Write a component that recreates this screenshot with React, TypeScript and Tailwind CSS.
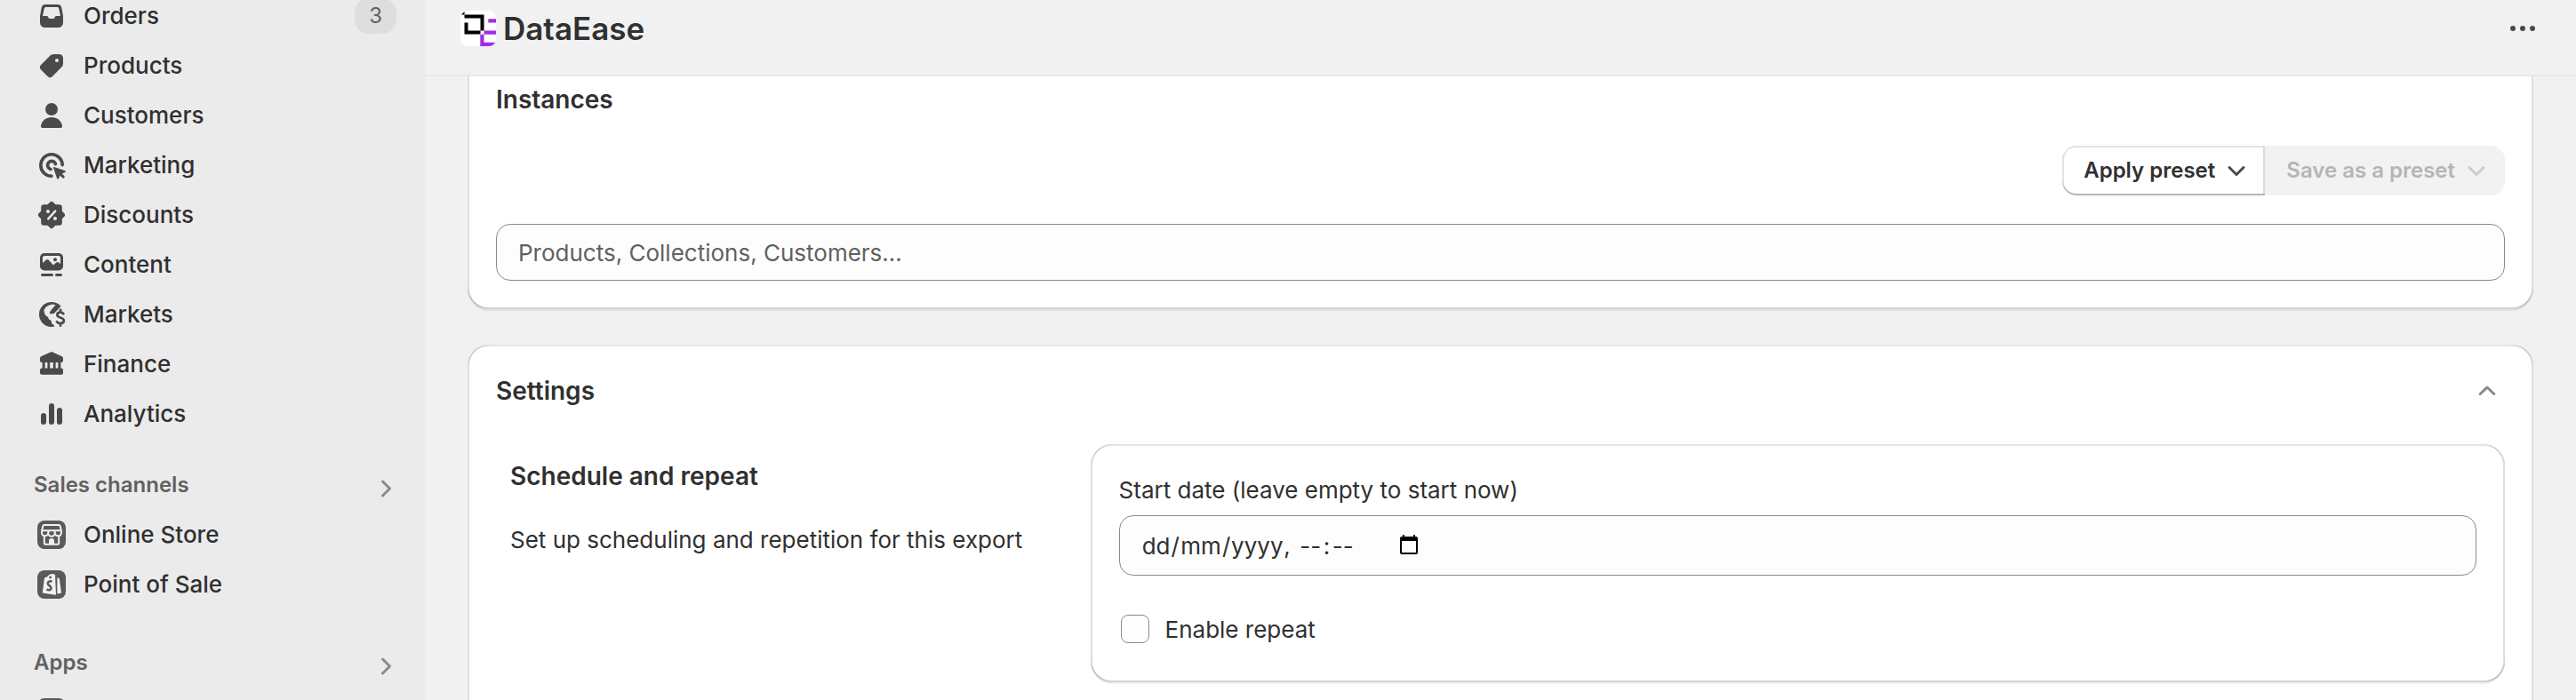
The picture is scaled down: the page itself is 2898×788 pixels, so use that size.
import React from "react";

function NavIcon({ children }: { children: React.ReactNode }) {
  return (
    <svg viewBox="0 0 20 20" className="size-10 shrink-0" fill="#4a4a4a" aria-hidden="true">
      {children}
    </svg>
  );
}

const OrdersIcon = () => (
  <NavIcon>
    <path d="M6.6 3.5h6.8a2.300 2.300 0 0 1 2.280 2l.82 4.500v3.750a2.750 2.750 0 0 1-2.750 2.750h-7.500a2.750 2.750 0 0 1-2.750-2.750V10l.82-4.500a2.300 2.300 0 0 1 2.280-2z" />
    <path
      fill="#ebebeb"
      d="M6.9 5h6.200c.5 0 .9.300 1 .8L15 10h-2.200c-.5 0-.8.300-1 .7-.1.400-.4.800-.9.800H9.100c-.5 0-.8-.4-.9-.8-.2-.4-.5-.7-1-.7H5l.9-4.200c.1-.5.5-.8 1-.8z"
    />
  </NavIcon>
);

const ProductsIcon = () => (
  <NavIcon>
    <path
      fillRule="evenodd"
      d="M11.2 3.5h3.050a2.250 2.250 0 0 1 2.250 2.250v3.050a2.750 2.750 0 0 1-.8 1.950l-5.2 5.2a1.900 1.900 0 0 1-2.700 0l-3.750-3.750a1.900 1.900 0 0 1 0-2.700l5.200-5.200a2.750 2.750 0 0 1 1.950-.8zM13 8a1 1 0 1 0 0-2 1 1 0 0 0 0 2z"
    />
  </NavIcon>
);

const CustomersIcon = () => (
  <NavIcon>
    <circle cx="10" cy="6.5" r="3.5" />
    <path d="M10 11c-3.100 0-5.400 1.900-6 4.700-.15.75.4 1.300 1.100 1.300h9.800c.7 0 1.250-.55 1.100-1.300-.6-2.800-2.900-4.700-6-4.700z" />
  </NavIcon>
);

const MarketingIcon = () => (
  <NavIcon>
    <path
      d="M16.100 9.800A6.100 6.100 0 1 0 10 16.100"
      fill="none"
      stroke="#4a4a4a"
      strokeWidth="1.800"
      strokeLinecap="round"
    />
    <path
      d="M12.250 9.300A2.300 2.300 0 1 0 9.500 12.250"
      fill="none"
      stroke="#4a4a4a"
      strokeWidth="1.800"
      strokeLinecap="round"
    />
    <path d="M11.400 11l6.100 2.050c.45.15.45.75.05.95l-1.650.8 1.300 1.300a.75.75 0 0 1-1.050 1.050l-1.350-1.300-.8 1.650c-.2.45-.8.4-.95-.05L11 11.400a.35.35 0 0 1 .4-.4z" />
  </NavIcon>
);

const DiscountsIcon = () => (
  <NavIcon>
    <rect x="4.100" y="4.100" width="11.800" height="11.800" rx="1.600" />
    <rect x="4.300" y="4.300" width="11.400" height="11.400" rx="1.400" transform="rotate(45 10 10)" />
    <path d="M8.100 12.200l4-4.400" stroke="#ebebeb" strokeWidth="1.200" strokeLinecap="round" />
    <circle cx="8" cy="8" r="1" fill="#ebebeb" />
    <circle cx="12" cy="12" r="1" fill="#ebebeb" />
  </NavIcon>
);

const ContentIcon = () => (
  <NavIcon>
    <rect x="3.500" y="3.500" width="13" height="9.700" rx="2.500" />
    <path
      fill="#ebebeb"
      d="M6 5h8a1 1 0 0 1 1 1v3.600l-.9-.8a1.100 1.100 0 0 0-1.500 0l-1.600 1.500-2.600-2.900a1.100 1.100 0 0 0-1.600 0L5 9V6a1 1 0 0 1 1-1z"
    />
    <circle cx="12" cy="7.100" r="1" />
    <rect x="4" y="15" width="7" height="1.500" rx=".75" />
    <rect x="12" y="15" width="4" height="1.500" rx=".75" />
  </NavIcon>
);

const MarketsIcon = () => (
  <NavIcon>
    <circle cx="10" cy="10" r="7" />
    <path
      fill="#ebebeb"
      d="M5.700 7.700C6.200 6.200 7.600 4.900 9.500 4.500c.8-.1 1.800-.1 2.700.1L10 7.200l-1 1.500c-.2.500.1.900.6.900l1.700-.1 1.300-1.200L15.600 5 18 7.500V18h-6.500l-.1-2c-.3-.5-1.400-.7-1.400-1.300 0-.8-.2-1.500-1-1.700-.7-.2-.7-1.400-1.300-1.800C6.800 10.700 6.200 10 6 9.200z"
    />
    <path
      d="M16.700 9.600c-.4-.6-.9-.8-1.700-.8-1 0-1.800.5-1.800 1.400 0 2 3.700 1.100 3.700 3.300 0 .9-.8 1.500-1.900 1.500-1 0-1.600-.3-2-.9M15 7.400v1.300M15 15v1.300"
      fill="none"
      stroke="#4a4a4a"
      strokeWidth="1.400"
      strokeLinecap="round"
    />
  </NavIcon>
);

const FinanceIcon = () => (
  <NavIcon>
    <path d="M9.300 3.200a1.500 1.500 0 0 1 1.400 0l5 2.300c.5.3.8.7.8 1.300v1.200c0 .6-.4 1-1 1h-11c-.6 0-1-.4-1-1V6.800c0-.6.3-1 .8-1.300z" />
    <rect x="4.800" y="8.500" width="1.500" height="4" />
    <rect x="7.700" y="8.500" width="1.400" height="4" />
    <rect x="10.900" y="8.500" width="1.400" height="4" />
    <rect x="13.700" y="8.500" width="1.500" height="4" />
    <rect x="3.500" y="12.200" width="13" height="3.700" rx="1" />
  </NavIcon>
);

const AnalyticsIcon = () => (
  <NavIcon>
    <rect x="4" y="9.500" width="3" height="6.500" rx="1.500" />
    <rect x="8.500" y="4" width="3" height="12" rx="1.500" />
    <rect x="13" y="6.500" width="3" height="9.500" rx="1.500" />
  </NavIcon>
);

const OnlineStoreIcon = () => (
  <NavIcon>
    <rect x="2" y="2" width="16" height="16" rx="4" fill="#5a5a5a" />
    <g fill="none" stroke="#f1f1f1" strokeWidth="1" strokeLinejoin="round">
      <path d="M6 4.500h8c.5 0 .8.300.9.700L15.500 8v.7a1.600 1.600 0 0 1-3.600.3 1.900 1.900 0 0 1-3.800 0 1.600 1.600 0 0 1-3.600-.3V8l.6-2.800c.1-.4.4-.7.9-.7z" />
      <path d="M4.600 7.600h10.800M8.200 7.600V9M11.800 7.600V9M5.900 10.400v4.400c0 .3.200.6.6.6h7c.4 0 .6-.3.6-.6v-4.400" />
    </g>
    <path d="M8.500 15.500v-2.300c0-.7.5-1.200 1.500-1.200s1.500.5 1.500 1.200v2.300z" fill="#f1f1f1" />
  </NavIcon>
);

const PointOfSaleIcon = () => (
  <NavIcon>
    <rect x="2" y="2" width="16" height="16" rx="4" fill="#5a5a5a" />
    <path
      d="M6 6.200l1.700-.7C8.300 4.500 9.400 4 10.500 4l1.500.4.500 11.500-7.600-1.200z"
      fill="#f1f1f1"
    />
    <path d="M13.200 6l1.200.6 1.100 8.100-2.300.5z" fill="#f1f1f1" />
    <circle cx="9.300" cy="6" r=".7" fill="#5a5a5a" />
    <path
      d="M10.300 8.400c-1.300-.6-2.400 0-2.400 1 0 1.300 2 1.300 1.900 2.700-.1 1.100-1.400 1.300-2.500.6"
      fill="none"
      stroke="#5a5a5a"
      strokeWidth="1.300"
    />
  </NavIcon>
);

const AppTileIcon = () => (
  <NavIcon>
    <rect x="2" y="2" width="16" height="16" rx="4" fill="#5a5a5a" />
  </NavIcon>
);

const ChevronRight = () => (
  <svg viewBox="0 0 24 24" className="mt-2 size-6" fill="none" stroke="#8a8a8a" strokeWidth="3" strokeLinecap="round" strokeLinejoin="round" aria-hidden="true">
    <path d="M8.500 4l8 8-8 8" />
  </svg>
);

const ChevronDown = () => (
  <svg viewBox="0 0 24 24" className="size-6" fill="none" stroke="currentColor" strokeWidth="3" strokeLinecap="round" strokeLinejoin="round" aria-hidden="true">
    <path d="M4 8.500l8 8 8-8" />
  </svg>
);

const Logo = () => (
  <svg viewBox="0 0 40 40" className="size-10" aria-hidden="true">
    <clipPath id="logo-clip">
      <rect width="40" height="40" rx="8" />
    </clipPath>
    <rect width="40" height="40" rx="8" fill="#fff" />
    <path d="M1 4.500L4.500 1v3.500z" fill="#000" />
    <path d="M4.500 4.500h22v18h-4v-14h-18z" fill="#000" />
    <path d="M4.500 13.500h4v9h14v4h-18z" fill="#000" />
    <g fill="#a02be8" clipPath="url(#logo-clip)">
      <path d="M31.300 9.300H40v4.200h-8.700z" />
      <path d="M26.500 22.500H40v4.200H26.500z" />
      <path d="M22.300 26.700h4.200v9H40V40H22.300z" />
    </g>
  </svg>
);

const mainNav = [
  { label: "Orders", Icon: OrdersIcon, badge: "3" },
  { label: "Products", Icon: ProductsIcon },
  { label: "Customers", Icon: CustomersIcon },
  { label: "Marketing", Icon: MarketingIcon },
  { label: "Discounts", Icon: DiscountsIcon },
  { label: "Content", Icon: ContentIcon },
  { label: "Markets", Icon: MarketsIcon },
  { label: "Finance", Icon: FinanceIcon },
  { label: "Analytics", Icon: AnalyticsIcon },
];

const channels = [
  { label: "Online Store", Icon: OnlineStoreIcon },
  { label: "Point of Sale", Icon: PointOfSaleIcon },
];

function NavItem({ label, Icon, badge }: { label: string; Icon: () => React.ReactElement; badge?: string }) {
  return (
    <li>
      <a href="#" className="flex h-14 items-center gap-4">
        <Icon />
        <span className="flex-1 text-[26px] leading-10 font-[550]">{label}</span>
        {badge && (
          <span className="flex h-10 items-center rounded-2xl bg-[#dedede] px-4 text-2xl text-[#616161]">{badge}</span>
        )}
      </a>
    </li>
  );
}

function NavHeading({ children }: { children: React.ReactNode }) {
  return (
    <button type="button" className="flex h-14 w-full items-center justify-between text-2xl font-semibold text-[#616161]">
      {children}
      <ChevronRight />
    </button>
  );
}

function Card({ className, children }: { className: string; children: React.ReactNode }) {
  return (
    <section
      className={
        "rounded-3xl bg-white px-8 pt-8 shadow-[0_2px_0_0_rgba(26,26,26,0.07),inset_2px_0_0_0_rgba(0,0,0,0.13),inset_-2px_0_0_0_rgba(0,0,0,0.13),inset_0_-2px_0_0_rgba(0,0,0,0.17),inset_0_2px_0_0_rgba(204,204,204,0.5)] " +
        className
      }
    >
      {children}
    </section>
  );
}

const segmentClass = "bg-transparent p-0 text-center outline-none placeholder:text-[#303030]";

export default function App() {
  return (
    <div className="flex h-screen overflow-hidden bg-[#f1f1f1] font-['Inter',sans-serif] text-[#303030]">
      <aside className="w-[478px] shrink-0 overflow-hidden bg-[#ebebeb] pr-8 pl-[38px]">
        <nav className="-mt-[10px]" aria-label="Main">
          <ul>
            {mainNav.map((item) => (
              <NavItem key={item.label} {...item} />
            ))}
          </ul>
          <div className="mt-6">
            <NavHeading>Sales channels</NavHeading>
            <ul>
              {channels.map((item) => (
                <NavItem key={item.label} {...item} />
              ))}
            </ul>
          </div>
          <div className="mt-8">
            <NavHeading>Apps</NavHeading>
            <a href="#" aria-label="App" className="flex h-14 items-center">
              <AppTileIcon />
            </a>
          </div>
        </nav>
      </aside>

      <main className="min-w-0 flex-1">
        <header className="relative z-10 flex h-[86px] items-start justify-between border-b-2 border-[#e8e8e8] bg-[#f1f1f1] pt-3 pr-10 pl-10">
          <div className="flex items-center gap-2">
            <Logo />
            <h1 className="text-[35px] leading-10 font-semibold">DataEase</h1>
          </div>
          <button type="button" aria-label="More actions" className="size-10">
            <svg viewBox="0 0 40 40" className="size-10" fill="#4a4a4a" aria-hidden="true">
              <circle cx="9" cy="20" r="3" />
              <circle cx="20" cy="20" r="3" />
              <circle cx="31" cy="20" r="3" />
            </svg>
          </button>
        </header>

        <div className="flex flex-col gap-10 px-12">
          <Card className="-mt-[26px] flex flex-col gap-8 pb-8">
            <h2 className="text-[28px] leading-10 font-semibold">Instances</h2>
            <div className="flex justify-end">
              <button
                type="button"
                className="flex h-14 items-center gap-3 rounded-l-2xl bg-white pr-5 pl-6 text-2xl font-semibold shadow-[inset_0_-2px_0_0_#b5b5b5,inset_2px_0_0_0_#e3e3e3,inset_-2px_0_0_0_#dcdcdc,inset_0_2px_0_0_#e3e3e3]"
              >
                Apply preset
                <span className="text-[#4a4a4a]">
                  <ChevronDown />
                </span>
              </button>
              <button
                type="button"
                disabled
                className="flex h-14 items-center gap-3 rounded-r-2xl bg-[#f2f2f2] pr-5 pl-6 text-2xl font-semibold text-[#b5b5b5]"
              >
                Save as a preset
                <span className="text-[#cccccc]">
                  <ChevronDown />
                </span>
              </button>
            </div>
            <input
              type="text"
              aria-label="Instances"
              placeholder="Products, Collections, Customers..."
              className="h-16 w-full rounded-2xl border border-[#8a8a8a] bg-[#fdfdfd] px-6 text-[26px] placeholder:text-[#616161]"
            />
          </Card>

          <Card className="flex flex-col gap-10 pb-16">
            <button type="button" className="flex items-center justify-between pr-2" aria-expanded="true">
              <h2 className="text-[28px] leading-10 font-semibold">Settings</h2>
              <svg viewBox="0 0 24 24" className="size-6" fill="none" stroke="#8a8a8a" strokeWidth="3" strokeLinecap="round" strokeLinejoin="round" aria-hidden="true">
                <path d="M4.200 15.500l7.800-7.500 7.800 7.500" />
              </svg>
            </button>
            <div className="grid grid-cols-[2fr_5fr] gap-8">
              <div className="flex flex-col gap-8 p-4">
                <h3 className="text-[28px] leading-10 font-semibold">Schedule and repeat</h3>
                <p className="text-[26px] leading-10">Set up scheduling and repetition for this export</p>
              </div>
              <Card className="flex flex-col pb-8">
                <label htmlFor="start-day" className="text-[26px] leading-10">
                  Start date (leave empty to start now)
                </label>
                <div className="mt-2 flex h-[68px] items-center rounded-2xl border border-[#8a8a8a] bg-[#fdfdfd] px-6 text-[26px]">
                  <input id="start-day" placeholder="dd" className={segmentClass + " w-[34px]"} />
                  <span>/</span>
                  <input aria-label="Month" placeholder="mm" className={segmentClass + " w-[48px]"} />
                  <span>/</span>
                  <input aria-label="Year" placeholder="yyyy" className={segmentClass + " w-[60px]"} />
                  <span>,</span>
                  <input aria-label="Hours" placeholder="--" className={segmentClass + " ml-2 w-[29px]"} />
                  <span>:</span>
                  <input aria-label="Minutes" placeholder="--" className={segmentClass + " w-[29px]"} />
                  <button type="button" aria-label="Open calendar" className="ml-[50px]">
                    <svg viewBox="0 0 20 24" className="h-6 w-5" aria-hidden="true">
                      <path
                        fillRule="evenodd"
                        d="M3 0h2v2h10V0h2v2h1a2 2 0 0 1 2 2v16a2 2 0 0 1-2 2H2a2 2 0 0 1-2-2V4a2 2 0 0 1 2-2h1zM2 7v13h16V7z"
                      />
                    </svg>
                  </button>
                </div>
                <label className="mt-8 flex h-14 items-center gap-[18px] pl-[2px] text-[26px]">
                  <input type="checkbox" className="size-8 appearance-none rounded-lg border border-[#8a8a8a] bg-[#fdfdfd]" />
                  Enable repeat
                </label>
              </Card>
            </div>
          </Card>
        </div>
      </main>
    </div>
  );
}
